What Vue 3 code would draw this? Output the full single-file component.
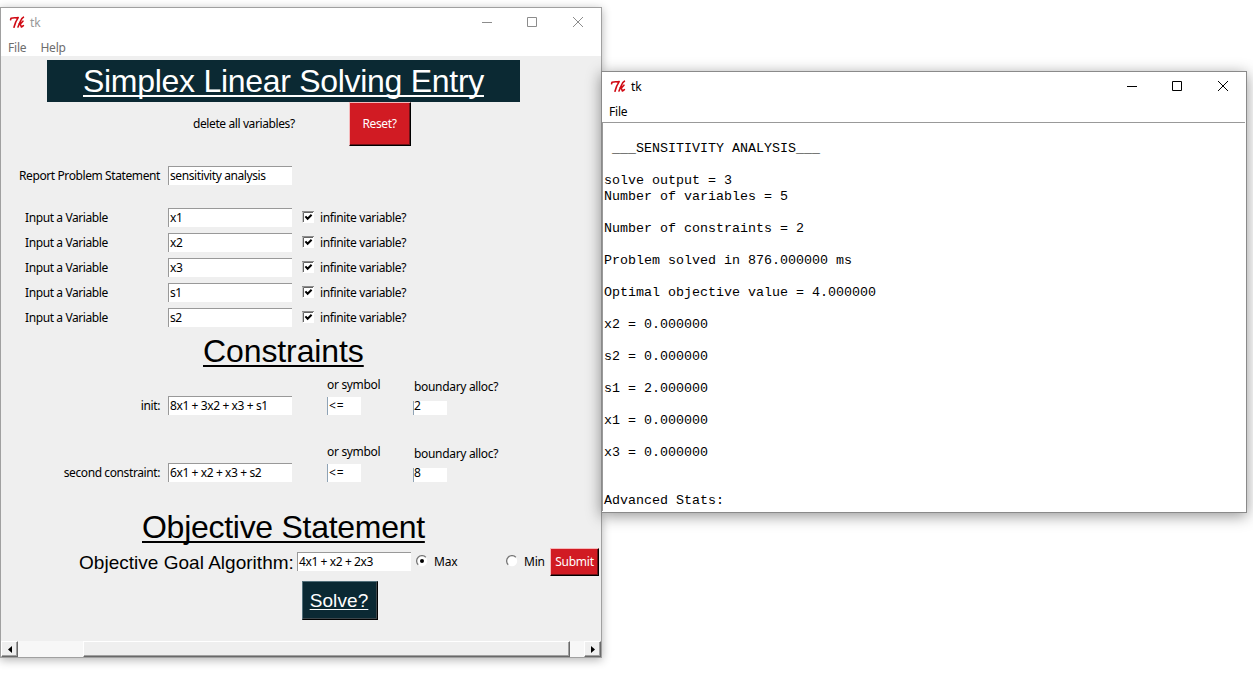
<script setup>
const variables = ['x1', 'x2', 'x3', 's1', 's2']

const constraints = [
  { label: 'init:', expression: '8x1 + 3x2 + x3 + s1', symbol: '<=', bound: '2' },
  { label: 'second constraint:', expression: '6x1 + x2 + x3 + s2', symbol: '<=', bound: '8' },
]

const report = `
 ___SENSITIVITY ANALYSIS___

solve output = 3
Number of variables = 5

Number of constraints = 2

Problem solved in 876.000000 ms

Optimal objective value = 4.000000

x2 = 0.000000

s2 = 0.000000

s1 = 2.000000

x1 = 0.000000

x3 = 0.000000


Advanced Stats:`
</script>

<template>
  <main class="desktop">
    <section class="window entry-window">
      <header class="titlebar inactive">
        <svg class="logo" viewBox="0 0 16 16" width="16" height="16">
          <path d="M1.6 4.8L2 3.2Q4.5 2.6 7.8 2.9L9.2 2.6Q6.4 6.5 5 12.2" />
          <path d="M14.4 2.2Q12.8 2.8 11.2 6.8L9 12M10 8.8Q12.8 8.4 14 6.2M11.2 8.9L12.4 12L14.4 10.6" />
        </svg>
        <span class="caption">tk</span>
        <svg class="controls" viewBox="0 0 102 12" width="102" height="12">
          <path d="M0 6.5h10M45.5 1.5h9v9h-9zM91 1l10 10M101 1l-10 10" />
        </svg>
      </header>
      <nav class="menubar inactive"><span>File</span><span>Help</span></nav>

      <div class="form">
        <h1 class="banner"><span class="under">Simplex Linear Solving Entry</span></h1>

        <div class="reset-row">
          <span class="reset-label">delete all variables?</span>
          <button class="btn red reset">Reset?</button>
        </div>

        <div class="row statement">
          <span class="label right">Report Problem Statement</span>
          <span class="field">sensitivity analysis</span>
        </div>

        <div class="variables">
          <div v-for="name in variables" :key="name" class="row">
            <span class="label">Input a Variable</span>
            <span class="field">{{ name }}</span>
            <span class="check">
              <svg class="box" viewBox="0 0 12 12" width="12" height="12">
                <rect width="12" height="12" fill="#fff" />
                <path d="M0 11.5V.5H12" stroke="#8c8c8c" fill="none" />
                <path d="M1.5 11V1.5H11" stroke="#646464" fill="none" />
                <path d="M3.4 5.4L5.6 7.8L9.6 3.7" stroke="#000" stroke-width="2" fill="none" />
              </svg>
              infinite variable?
            </span>
          </div>
        </div>

        <h2 class="heading constraints-title"><span class="under">Constraints</span></h2>

        <div v-for="c in constraints" :key="c.label" class="constraint">
          <span class="label right">{{ c.label }}</span>
          <span class="field">{{ c.expression }}</span>
          <div class="symbol">
            <span class="hint">or symbol</span>
            <span class="field small">{{ c.symbol }}</span>
          </div>
          <div class="bound">
            <span class="hint">boundary alloc?</span>
            <span class="field tiny">{{ c.bound }}</span>
          </div>
        </div>

        <h2 class="heading objective-title"><span class="under">Objective Statement</span></h2>

        <div class="goal">
          <span class="goal-label">Objective Goal Algorithm:</span>
          <span class="field goal-field">4x1 + x2 + 2x3</span>
          <span class="radio max">
            <svg viewBox="0 0 12 12" width="12" height="12">
              <circle cx="6" cy="6" r="5.2" fill="#fff" />
              <path d="M2.2 9.8A5.3 5.3 0 0 1 9.8 2.2" stroke="#777" stroke-width="1.3" fill="none" />
              <circle cx="6" cy="6" r="2" fill="#000" />
            </svg>
            Max
          </span>
          <span class="radio min">
            <svg viewBox="0 0 12 12" width="12" height="12">
              <circle cx="6" cy="6" r="5.2" fill="#fff" />
              <path d="M2.2 9.8A5.3 5.3 0 0 1 9.8 2.2" stroke="#777" stroke-width="1.3" fill="none" />
            </svg>
            Min
          </span>
          <button class="btn red submit">Submit</button>
        </div>

        <button class="btn solve"><span>Solve?</span></button>

        <div class="scrollbar">
          <span class="arrow">
            <svg viewBox="0 0 4 7" width="4" height="7"><path d="M4 0v7L0 3.5z" /></svg>
          </span>
          <span class="thumb"></span>
          <span class="arrow end">
            <svg viewBox="0 0 4 7" width="4" height="7"><path d="M0 0v7L4 3.5z" /></svg>
          </span>
        </div>
      </div>
    </section>

    <section class="window report-window">
      <header class="titlebar">
        <svg class="logo" viewBox="0 0 16 16" width="16" height="16">
          <path d="M1.6 4.8L2 3.2Q4.5 2.6 7.8 2.9L9.2 2.6Q6.4 6.5 5 12.2" />
          <path d="M14.4 2.2Q12.8 2.8 11.2 6.8L9 12M10 8.8Q12.8 8.4 14 6.2M11.2 8.9L12.4 12L14.4 10.6" />
        </svg>
        <span class="caption">tk</span>
        <svg class="controls" viewBox="0 0 102 12" width="102" height="12">
          <path d="M0 6.5h10M45.5 1.5h9v9h-9zM91 1l10 10M101 1l-10 10" />
        </svg>
      </header>
      <nav class="menubar"><span>File</span></nav>
      <pre class="report">{{ report }}</pre>
    </section>
  </main>
</template>

<style>
body {
  background: #fff;
  overflow: hidden;
}
</style>

<style scoped>
.desktop {
  position: relative;
  width: 1253px;
  height: 693px;
  overflow: hidden;
  font: 12px/19px "Noto Sans", "Open Sans", sans-serif;
  letter-spacing: -0.4px;
  color: #000;
}

.window {
  position: absolute;
  box-sizing: border-box;
  display: flex;
  flex-direction: column;
  background: #fff;
}

.entry-window {
  left: 0;
  top: 7px;
  width: 602px;
  height: 651px;
  border: 1px solid #a0a0a0;
  box-shadow: 0 2px 9px rgba(0, 0, 0, 0.3);
}

.report-window {
  left: 601px;
  top: 71px;
  width: 646px;
  height: 442px;
  border: 1px solid #8a8a8a;
  box-shadow: 0 3px 14px rgba(0, 0, 0, 0.42);
}

.titlebar {
  display: flex;
  align-items: center;
  flex: none;
  height: 30px;
  padding: 0 17px 0 8px;
}

.logo {
  fill: none;
  stroke: #d00a14;
  stroke-width: 1.6;
  stroke-linecap: round;
  stroke-linejoin: round;
}

.caption {
  margin: -2px 0 0 5px;
  letter-spacing: 0;
}

.controls {
  margin-left: auto;
  margin-top: -2px;
  fill: none;
  stroke: #000;
  stroke-width: 1;
}

.titlebar.inactive .caption {
  color: #999;
}

.titlebar.inactive .controls {
  stroke: #8c8c8c;
}

.menubar {
  display: flex;
  flex: none;
  gap: 14px;
  height: 18px;
  padding-left: 7px;
  line-height: 19px;
  letter-spacing: -0.2px;
}

.menubar.inactive {
  color: #6d6d6d;
}

.form {
  display: flex;
  flex: 1;
  flex-direction: column;
  background: #efefef;
}

.banner,
.heading {
  font: 400 32px/36px "Liberation Sans", Arial, sans-serif;
  margin: 0;
}

.under {
  text-decoration: underline 2px;
  text-decoration-skip-ink: none;
  text-underline-offset: 3px;
}

.banner {
  box-sizing: border-box;
  width: 473px;
  height: 42px;
  margin: 4px 0 0 46px;
  padding-left: 36px;
  line-height: 42px;
  background: #0b2933;
  color: #fff;
  letter-spacing: -0.29px;
}

.reset-row {
  display: flex;
  height: 44px;
  padding-left: 192px;
  line-height: 43px;
}

.reset-label {
  width: 156px;
}

.btn {
  box-sizing: border-box;
  margin: 0;
  padding: 0;
  border: 1px solid;
  font: inherit;
  letter-spacing: inherit;
  color: #fff;
  white-space: nowrap;
}

.red {
  background: #d11b23;
  border-color: #f6b9bb #000 #000 #f6b9bb;
  box-shadow: inset -1px -1px 0 #6d1216;
}

.reset {
  width: 62px;
  height: 44px;
  padding: 0 1px 2px 0;
  line-height: 19px;
}

.row {
  display: flex;
  height: 19px;
}

.statement {
  margin-top: 20px;
}

.label {
  box-sizing: border-box;
  width: 159px;
  margin-right: 8px;
  padding-left: 24px;
  white-space: nowrap;
}

.label.right {
  padding-left: 0;
  text-align: right;
}

.field {
  box-sizing: border-box;
  width: 124px;
  height: 19px;
  padding-left: 1px;
  border-top: 1px solid #999;
  border-left: 1px solid #999;
  background: #fff;
  line-height: 18px;
  white-space: pre;
}

.variables {
  display: flex;
  flex-direction: column;
  gap: 6px;
  margin-top: 23px;
}

.check {
  display: flex;
  align-items: flex-start;
  margin-left: 10px;
  letter-spacing: -0.36px;
}

.box {
  margin: 3px 6px 0 0;
}

.heading {
  height: 36px;
}

.constraints-title {
  margin: 6px 0 9px 202px;
  letter-spacing: -0.1px;
}

.constraint {
  display: flex;
  height: 37px;
  margin-bottom: 30px;
}

.constraint > .label,
.constraint > .field {
  margin-top: 18px;
}

.symbol,
.bound {
  display: flex;
  flex-direction: column;
}

.symbol {
  width: 86px;
  margin-left: 35px;
}

.hint {
  height: 19px;
  margin-top: -3px;
  white-space: nowrap;
  letter-spacing: -0.32px;
}

.bound .hint {
  margin: -1px 0 0 1px;
}

.small {
  width: 34px;
  height: 18px;
  margin-top: 3px;
  border-top: 0;
  border-left-color: #8fa3b5;
  padding-left: 1px;
  line-height: 17px;
  letter-spacing: 0.8px;
}

.tiny {
  width: 34px;
  height: 14px;
  margin-top: 5px;
  border-top: 0;
  border-left-color: #8fa3b5;
  padding-left: 0;
  line-height: 9px;
}

.objective-title {
  margin: -3px 0 0 141px;
  letter-spacing: -0.28px;
}

.goal {
  display: flex;
  height: 30px;
  margin-top: 3px;
  padding-left: 78px;
}

.goal-label {
  width: 218px;
  margin-top: 4px;
  font: 19px/21px "Liberation Sans", Arial, sans-serif;
  letter-spacing: 0.02px;
  white-space: nowrap;
}

.goal-field {
  width: 114px;
  margin-top: 4px;
}

.radio {
  display: flex;
  align-items: flex-start;
  margin-top: 4px;
  letter-spacing: -0.2px;
}

.radio svg {
  margin: 3px 6px 0 0;
}

.radio.max {
  width: 90px;
  margin-left: 5px;
}

.radio.min {
  width: 44px;
}

.submit {
  width: 49px;
  height: 28px;
  padding-bottom: 1px;
  line-height: 19px;
  letter-spacing: -0.25px;
}

.solve {
  width: 76px;
  height: 39px;
  margin: 3px 0 0 301px;
  padding-right: 2px;
  border-color: #54707a #000 #000 #54707a;
  background: #0b2933;
  box-shadow: inset -1px -1px 0 #3d464a;
  font: 19px/37px "Liberation Sans", Arial, sans-serif;
  letter-spacing: 0.1px;
}

.solve span {
  text-decoration: underline 1px;
  text-underline-offset: 2px;
}

.scrollbar {
  display: flex;
  height: 16px;
  margin-top: auto;
  background: #f7f7f7;
}

.arrow,
.thumb {
  box-sizing: border-box;
  height: 16px;
  border: 1px solid;
  border-color: #fff #696969 #696969 #fff;
  background: #efefef;
  box-shadow: inset -1px -1px 0 #a0a0a0;
}

.arrow {
  display: flex;
  align-items: center;
  justify-content: center;
  width: 17px;
}

.arrow.end {
  margin-left: auto;
}

.thumb {
  width: 487px;
  margin-left: 65px;
}

.report {
  flex: 1;
  margin: 2px 1px 1px 0;
  padding: 2px 0 0 1px;
  border-top: 1px solid #999;
  border-left: 1px solid #999;
  font: 13.333px/16px "Liberation Mono", "Courier New", monospace;
  letter-spacing: 0;
}
</style>
